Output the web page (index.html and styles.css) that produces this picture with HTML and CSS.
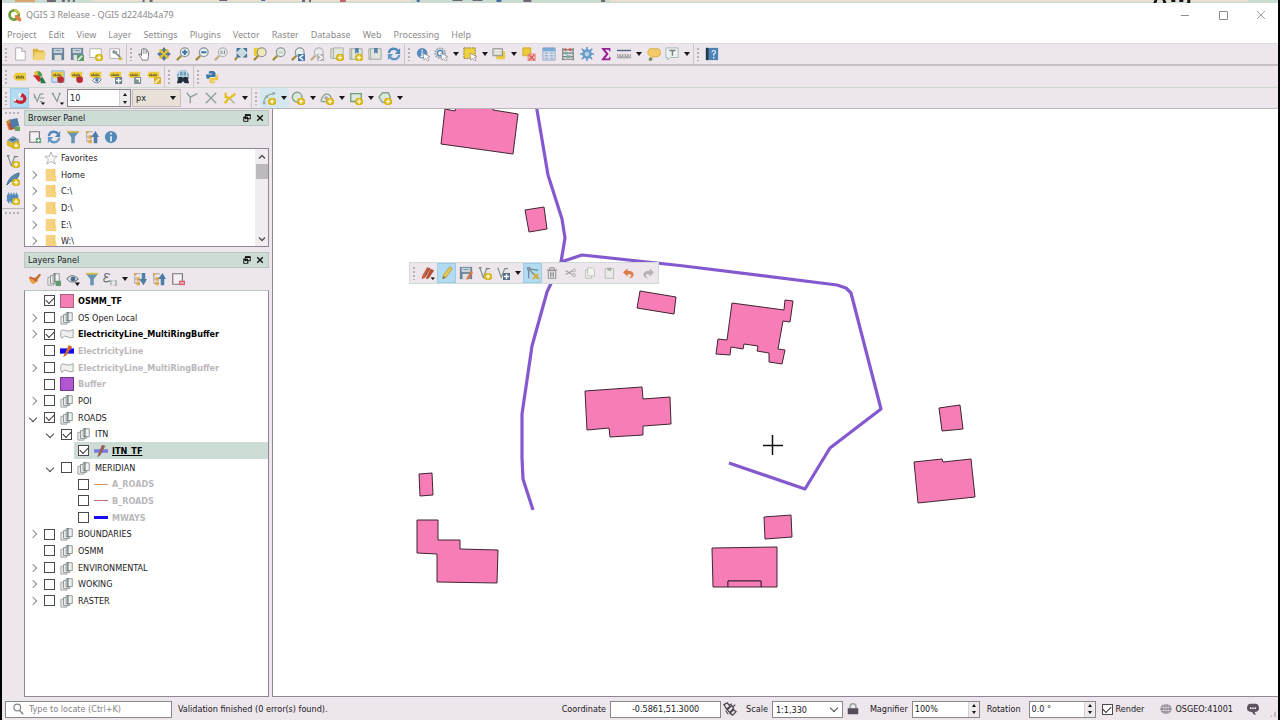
FILE: index.html
```html
<!DOCTYPE html>
<html lang="en">
<head>
<meta charset="utf-8">
<title>QGIS 3 Release - QGIS d2244b4a79</title>
<link rel="stylesheet" href="styles.css">
</head>
<body>
<svg class="defs" aria-hidden="true">
<symbol id="plus" viewBox="0 0 16 16"><path d="M9 8h5l2 2v4l-2 2H9l-2-2v-4z" fill="#d6b51d"/><path d="M11.500 9.500v5M9 12h5" stroke="#fff8c8" stroke-width="1.600"/></symbol>
<symbol id="file" viewBox="0 0 16 16"><path d="M3 1h7l4 4v10H3z" fill="#fff" stroke="#a9a6a9"/><path d="M10 1v4h4" fill="#eee" stroke="#a9a6a9"/></symbol>
<symbol id="folder" viewBox="0 0 16 16"><path d="M1 2h5l2 2h6v10H1z" fill="#d9b43b"/><path d="M3 6h13l-2 9H1z" fill="#f1d477"/></symbol>
<symbol id="save" viewBox="0 0 16 16"><path d="M1 1h14v14H1z" fill="#67839a"/><path d="M3 2h10v5H3z" fill="#c9d3da"/><path d="M4 9h8v6H4z" fill="#e0e0de"/><path d="M5 4h6" stroke="#7690a5"/></symbol>
<symbol id="saveas" viewBox="0 0 16 16"><use href="#save"/><path d="M8 9h8v7H8z" fill="#5f9a66"/><path d="M9 15l5-5" stroke="#e6f1e4" stroke-width="2"/></symbol>
<symbol id="layout" viewBox="0 0 16 16"><path d="M1 2h13v10H1z" fill="#fff" stroke="#aaa9aa"/><use href="#plus"/></symbol>
<symbol id="wrenchpage" viewBox="0 0 16 16"><path d="M1 2h11v11H1z" fill="#fff" stroke="#aaa9aa"/><path d="M6 5l7 7" stroke="#7d8989" stroke-width="2"/><path d="M4 7q-1-3 2-4l1 2 2-1q1 3-2 4z" fill="#8d989a"/><path d="M11 14l4-1" stroke="#cfae2c" stroke-width="2.500"/></symbol>
<symbol id="hand" viewBox="0 0 16 16"><path d="M5 15C4 12 1 10 1 8q2-1 3 2V3q1-2 2 0V2q1-2 2 0v1q1-2 2 0v2q2-1 2 1v5l-1 4z" fill="#fff" stroke="#6c696c"/><path d="M6 3v5M8 3v5M10 4v4" stroke="#969396"/></symbol>
<symbol id="pan" viewBox="0 0 16 16"><path d="M2 3l3-1 3 3 3-3 3 2-2 4 2 4-4 2-2-3-3 3-3-2 2-4z" fill="#e5c231"/><path d="M8 0l3 4H9v2H7V4H5zM8 16l3-4H9v-2H7v2H5zM0 8l4-3v2h2v2H4v2zM16 8l-4-3v2h-2v2h2v2z" fill="#4f769b"/></symbol>
<symbol id="lens" viewBox="0 0 16 16"><path d="M6 10l-5 5" stroke="#a38c31" stroke-width="2.500"/><circle cx="10" cy="6" r="5" fill="#e8efef" stroke="#8d9898" stroke-width="1.400"/></symbol>
<symbol id="zin" viewBox="0 0 16 16"><use href="#lens"/><path d="M10 3v6M7 6h6" stroke="#3c73a5" stroke-width="2.200"/></symbol>
<symbol id="zout" viewBox="0 0 16 16"><use href="#lens"/><path d="M7 6h6" stroke="#3c73a5" stroke-width="2.200"/></symbol>
<symbol id="znat" viewBox="0 0 16 16"><g opacity=".6"><use href="#lens"/></g><path d="M8 4v4M12 4v4M10 5v1M10 7v1" stroke="#777" stroke-width="1"/></symbol>
<symbol id="zfull" viewBox="0 0 16 16"><path d="M4 11l-3 4" stroke="#a38c31" stroke-width="2.500"/><path d="M3 1h12v11H3z" fill="#cad8df"/><path d="M3 1h5L3 6zM15 1v5l-5-5zM15 12h-5l5-5zM3 12V7l5 5z" fill="#48749b"/></symbol>
<symbol id="zsel" viewBox="0 0 16 16"><path d="M1 1h8v9H1z" fill="#ebcb2e"/><use href="#lens"/><circle cx="10" cy="6" r="4" fill="#f2e8b0"/></symbol>
<symbol id="zlayer" viewBox="0 0 16 16"><use href="#lens"/><path d="M7 4h6v4H7z" fill="#d5d6c8"/></symbol>
<symbol id="zlast" viewBox="0 0 16 16"><use href="#lens"/><path d="M8 8h8v8H8z" fill="#487caf"/><path d="M14 9l-4 3 4 3" fill="none" stroke="#fff" stroke-width="1.500"/></symbol>
<symbol id="znext" viewBox="0 0 16 16"><g opacity=".6"><use href="#lens"/></g><path d="M8 8h8v8H8z" fill="#b4b4b4"/><path d="M10 9l4 3-4 3" fill="none" stroke="#fff" stroke-width="1.500"/></symbol>
<symbol id="map" viewBox="0 0 16 16"><path d="M1 2h10v11H1z" fill="#dcdfd4" stroke="#a5aaa1"/><path d="M4 1h11v12H4z" fill="#e2e6dc" stroke="#a5aaa1"/></symbol>
<symbol id="mapnew" viewBox="0 0 16 16"><use href="#map"/><use href="#plus"/></symbol>
<symbol id="bookmark" viewBox="0 0 16 16"><path d="M1 2h14v12H1z" fill="#e2e5de" stroke="#979f98"/><path d="M3 2v12" stroke="#a5aaa1"/><path d="M7 1h4v7L9 6 7 8z" fill="#4f80aa"/></symbol>
<symbol id="bmnew" viewBox="0 0 16 16"><use href="#bookmark"/><use href="#plus"/></symbol>
<symbol id="refresh" viewBox="0 0 16 16"><path d="M2 7q1-5 6-5 3 0 5 3" fill="none" stroke="#4f87b8" stroke-width="2.600"/><path d="M15 1v7H9z" fill="#4f87b8"/><path d="M14 9q-1 5-6 5-3 0-5-3" fill="none" stroke="#6298c3" stroke-width="2.600"/><path d="M1 15V8h6z" fill="#6298c3"/></symbol>
<symbol id="cursor" viewBox="0 0 16 16"><path d="M8 7l8 4-3 1 2 3-2 1-2-3-2 2z" fill="#fff" stroke="#898689" stroke-width=".8"/></symbol>
<symbol id="identify" viewBox="0 0 16 16"><circle cx="7" cy="7" r="6" fill="#568bbb"/><path d="M7 3v2M7 6v5M5 11h4" stroke="#e6f2ff" stroke-width="1.600"/><use href="#cursor"/></symbol>
<symbol id="gear" viewBox="0 0 16 16"><circle cx="8" cy="8" r="4" fill="#b9d3e6" stroke="#6c9fca" stroke-width="3"/><path d="M8 0v4M8 12v4M0 8h4M12 8h4M2 2l3 3M11 11l3 3M14 2l-3 3M2 14l3-3" stroke="#5e94c2" stroke-width="1.700"/></symbol>
<symbol id="action" viewBox="0 0 16 16"><circle cx="7" cy="7" r="5.500" fill="#dce3e7" stroke="#97a1a5" stroke-width="2" stroke-dasharray="2 1"/><circle cx="7" cy="7" r="3" fill="#fff" stroke="#568bbb" stroke-width="1.700"/><use href="#cursor"/></symbol>
<symbol id="select" viewBox="0 0 16 16"><path d="M1 1h13v12H1z" fill="#efd23f" stroke="#7d7440" stroke-dasharray="2 1"/><use href="#cursor"/></symbol>
<symbol id="selform" viewBox="0 0 16 16"><path d="M5 5h10v9H5z" fill="#eacb40"/><path d="M1 2h11v8H1z" fill="#d3d5ce" stroke="#888"/><path d="M3 4h7M3 7h7" stroke="#fff"/></symbol>
<symbol id="deselect" viewBox="0 0 16 16"><path d="M1 1h9v9H1z" fill="#ecca38" stroke="#c9a72c"/><path d="M7 8h8v8H7z" fill="#f6b9b4" stroke="#df7d77"/><path d="M8 9l6 6M14 9l-6 6" stroke="#d64c48" stroke-width="1.300"/></symbol>
<symbol id="table" viewBox="0 0 16 16"><path d="M1 1h14v14H1z" fill="#dbe3ef" stroke="#8ea0bd"/><path d="M1 1h14v4H1z" fill="#79acd5"/><path d="M3 7h4M9 7h4M3 10h4M9 10h4M3 13h4M9 13h4" stroke="#a0adcc" stroke-width="1.500"/></symbol>
<symbol id="abacus" viewBox="0 0 16 16"><path d="M2 1v14M14 1v14M1 14h14M2 3h12M2 7h12M2 11h12" fill="none" stroke="#777d7b" stroke-width="1.300"/><path d="M4 3h2M9 3h3" stroke="#d35a50" stroke-width="3"/><path d="M4 7h4M11 7h2M6 11h5" stroke="#7eac9f" stroke-width="3"/></symbol>
<symbol id="sigma" viewBox="0 0 16 16"><path d="M3 1h10v4h-1l-1-2H7l4 5-4 5h4l1-2h1v4H3v-1l5-6-5-6z" fill="#9c1f99"/></symbol>
<symbol id="ruler" viewBox="0 0 16 16"><path d="M0 4h16" stroke="#49647b" stroke-width="1.600"/><path d="M0 8h16v5H0z" fill="#a9a9a9"/><path d="M2 8v3M5 8v2M8 8v3M11 8v2M14 8v3" stroke="#eee"/></symbol>
<symbol id="tip" viewBox="0 0 16 16"><path d="M3 2h10l3 3v3l-3 3H8l-4 3v-3L1 8V5z" fill="#f2cb68" stroke="#d9aa45"/><circle cx="4" cy="14" r="2" fill="#64945f"/></symbol>
<symbol id="annot" viewBox="0 0 16 16"><path d="M1 1h14v11H6l-3 3v-3H1z" fill="#edf2f1" stroke="#9eb3ae"/><path d="M5 4h7M8.500 4v6" stroke="#777b83" stroke-width="1.600"/></symbol>
<symbol id="help" viewBox="0 0 16 16"><path d="M1 1h14v14H1z" fill="#4c83b3"/><path d="M1 1h3v14H1z" fill="#23384a"/><path d="M8 6q0-2 2-2t2 2q0 1-2 2v2M10 11v2" fill="none" stroke="#e4f0ff" stroke-width="1.400"/></symbol>
<symbol id="label" viewBox="0 0 16 16"><path d="M3 3h12v9H3L0 8z" fill="#eccb3c"/><path d="M4 7v3M6 6v4M8 7v3M10 6v4M12 7v3M4 8h8" stroke="#6e6429"/></symbol>
<symbol id="label2" viewBox="0 0 16 16"><path d="M2 2h12v7H3L0 6z" fill="#eccb3c"/><path d="M3 5v2M5 4v3M7 5v2M9 4v3M11 5v2M3 6h8" stroke="#6e6429"/></symbol>
<symbol id="diag" viewBox="0 0 16 16"><path d="M2 3q3-4 6 0v4l-3 1z" fill="#e5c535"/><path d="M6 1q5 0 6 6l-4 1z" fill="#4c9b4e"/><path d="M1 6h6l4 4-3 4z" fill="#cc302d"/><path d="M9 9l3-1 4 7h-6z" fill="#2e7b45"/></symbol>
<symbol id="lpin" viewBox="0 0 16 16"><use href="#label2"/><path d="M7 8l4 3" stroke="#777" stroke-width="1.500"/><circle cx="11" cy="11" r="3.800" fill="#b92e35"/></symbol>
<symbol id="lpinh" viewBox="0 0 16 16"><path d="M1 1h14v13H1z" fill="#c7e0f1" stroke="#72a6cd"/><use href="#lpin"/></symbol>
<symbol id="leye" viewBox="0 0 16 16"><use href="#label2"/><path d="M4 12q4-6 10-1-5 7-10 1z" fill="#fff" stroke="#5c6b78"/><circle cx="9" cy="11.500" r="2" fill="#417aa8"/></symbol>
<symbol id="lmove" viewBox="0 0 16 16"><use href="#label2"/><path d="M7 8h8v8H7z" fill="#6a7f89"/><path d="M11 9v6M8 12h6" stroke="#fff" stroke-width="1.500"/></symbol>
<symbol id="lrot" viewBox="0 0 16 16"><use href="#label2"/><path d="M7 8h8v8H7z" fill="#7b9393"/><path d="M13 14V10H9" fill="none" stroke="#fff" stroke-width="1.500"/></symbol>
<symbol id="ledit" viewBox="0 0 16 16"><use href="#label2"/><path d="M8 8h8v8H8z" fill="#dab02b"/><path d="M9 15l5-5" stroke="#fff4bd" stroke-width="2"/></symbol>
<symbol id="search3d" viewBox="0 0 16 16"><circle cx="8" cy="7" r="7" fill="#6f9ebd"/><path d="M2 4q6-6 12 0M1 7h14M8 0v8M4 2v6M12 2v6" fill="none" stroke="#d6e5e9"/><path d="M3 8h4l1 2 1-2h4l2 7h-5l-2-3-2 3H1z" fill="#222d38"/></symbol>
<symbol id="python" viewBox="0 0 16 16"><path d="M5 1h5l2 2v5H6L4 10H2L1 5h7V4H4z" fill="#3d77a6"/><path d="M13 5h2v6l-2 1H8v1h4l-1 2H6l-1-2V9h6l2-2z" fill="#ecc94b"/></symbol>
<symbol id="magnet" viewBox="0 0 16 16"><path d="M10 4q5 3 3 7-3 4-10 0" fill="none" stroke="#c62530" stroke-width="3.600"/><path d="M11 3l-2 4M3 9l-1 4" stroke="#c62530" stroke-width="2"/><path d="M7 2l3 1-2 4-2-1zM1 8l3 1-1 3-2-1z" fill="#f5f0f3"/></symbol>
<symbol id="vee" viewBox="0 0 16 16"><path d="M2 3l4 9 3-8 4-1M2 7l3 1M9 8h5M9 12h3" fill="none" stroke="#84998b" stroke-width="1.300"/><path d="M10 13h5l-2.500 3z" fill="#111"/></symbol>
<symbol id="vee2" viewBox="0 0 16 16"><path d="M2 3l5 9 3-9" fill="none" stroke="#84998b" stroke-width="1.300"/><path d="M1 2h2v2H1zM9 2h2v2H9z" fill="#84998b"/><path d="M10 13h5l-2.500 3z" fill="#111"/></symbol>
<symbol id="topo" viewBox="0 0 16 16"><path d="M2 2l4 5 8-4M6 7v7" fill="none" stroke="#8b9f94" stroke-width="1.500"/></symbol>
<symbol id="cross" viewBox="0 0 16 16"><path d="M2 2l12 12M14 2L2 14" stroke="#8b9f94" stroke-width="1.500"/></symbol>
<symbol id="trace" viewBox="0 0 16 16"><path d="M3 2v5l5 1 6-5M7 8l-5 6" fill="none" stroke="#e6bf22" stroke-width="2.600"/><path d="M8 9l5 5" stroke="#9daa9a" stroke-width="1.400"/></symbol>
<symbol id="arc" viewBox="0 0 16 16"><path d="M2 14q0-10 12-11" fill="none" stroke="#8ba89b" stroke-width="1.500"/><path d="M1 12h3v3H1zM4 5h3v3H4zM12 1h3v3h-3z" fill="#9fa9a5"/><use href="#plus"/></symbol>
<symbol id="circ" viewBox="0 0 16 16"><circle cx="7" cy="7" r="5.500" fill="#dce8de" stroke="#83a38d" stroke-width="1.600"/><use href="#plus"/></symbol>
<symbol id="ell" viewBox="0 0 16 16"><path d="M1 11q5-13 12-4M1 11q5 4 12-4" fill="none" stroke="#83a38d" stroke-width="1.500"/><circle cx="7" cy="8" r="2" fill="#9fa9a5"/><use href="#plus"/></symbol>
<symbol id="rect" viewBox="0 0 16 16"><path d="M2 3h12v9H2z" fill="#dce8de" stroke="#6e9e7c" stroke-width="1.500"/><use href="#plus"/></symbol>
<symbol id="poly" viewBox="0 0 16 16"><path d="M1 7l4-5h7l2 5-3 6H5z" fill="#dce8de" stroke="#83a38d" stroke-width="1.600"/><use href="#plus"/></symbol>
<symbol id="datasrc" viewBox="0 0 16 16"><path d="M0 5l5-3 6 10-8 3z" fill="#d58a31"/><path d="M2 8l5-2 4 7-6 2z" fill="#c64b3b"/><path d="M4 3l9-2 2 9-8 3z" fill="#4d7ca9"/><path d="M10 11h6v5h-6z" fill="#68a05d"/></symbol>
<symbol id="geopkg" viewBox="0 0 16 16"><path d="M1 6l7-5 7 4-6 5z" fill="#709bb9"/><path d="M1 6l8 4v6l-8-4z" fill="#ddb62e"/><path d="M9 10l6-5v6l-6 5z" fill="#c99b29"/><path d="M5 5l3 1 3-2" stroke="#1f3446" fill="none"/><use href="#plus"/></symbol>
<symbol id="vnew" viewBox="0 0 16 16"><path d="M2 2l4 11 4-10h4" fill="none" stroke="#84918b" stroke-width="1.400"/><path d="M1 1h3v2H1zM9 2h2v2H9z" fill="#84918b"/><use href="#plus"/></symbol>
<symbol id="feather" viewBox="0 0 16 16"><path d="M1 15Q3 4 15 1q0 8-10 10z" fill="#5e8baa" stroke="#3c6484"/><use href="#plus"/></symbol>
<symbol id="mem" viewBox="0 0 16 16"><path d="M1 4h13v8H1z" fill="#568bbb"/><path d="M3 2v12M6 2v12M9 2v12M12 2v12" stroke="#568bbb" stroke-width="1.500"/><use href="#plus"/></symbol>
<symbol id="addlayer" viewBox="0 0 16 16"><path d="M2 2h11v12H2z" fill="#f4f0f5" stroke="#777579" stroke-width="1.300"/><path d="M9 9h6v6H9z" fill="#65a176"/><path d="M12 10v4M10 12h4" stroke="#fff"/></symbol>
<symbol id="remlayer" viewBox="0 0 16 16"><path d="M2 2h11v12H2z" fill="#f4f0f5" stroke="#777579" stroke-width="1.300"/><path d="M9 10h7v5H9z" fill="#d85b65"/><path d="M10 12.500h5" stroke="#fff"/></symbol>
<symbol id="filter" viewBox="0 0 16 16"><path d="M1 2h14l-5 6v7H6V8z" fill="#6594b5"/><path d="M1 1h14v2H1z" fill="#d6bd48"/></symbol>
<symbol id="collapse" viewBox="0 0 16 16"><path d="M2 2h7M2 2v11M2 8h5M2 13h6" fill="none" stroke="#9fa29b"/><path d="M1 1h3v3H1zM4 6h4v4H4zM4 11h4v4H4z" fill="#dfa953"/><path d="M10 15V8H7l5-7 4 7h-2v7z" fill="#4c7ea7"/></symbol>
<symbol id="expand" viewBox="0 0 16 16"><path d="M2 2h7M2 2v11M2 8h5M2 13h6" fill="none" stroke="#9fa29b"/><path d="M1 1h3v3H1zM4 6h4v4H4zM4 11h4v4H4z" fill="#dfa953"/><path d="M10 1v7H7l5 7 4-7h-2V1z" fill="#4c7ea7"/></symbol>
<symbol id="info" viewBox="0 0 16 16"><circle cx="8" cy="8" r="7" fill="#538ab7"/><path d="M8 3v2M8 7v6" stroke="#e3f0ff" stroke-width="2"/></symbol>
<symbol id="brush" viewBox="0 0 16 16"><path d="M1 5q5 3 7 1l4 4-6 4q-5-3-5-9z" fill="#e5a544"/><path d="M7 8l6-6 2 1-5 7z" fill="#bd762f"/><path d="M2 6l5 2 2 3" fill="none" stroke="#d8543f" stroke-width="1.800"/></symbol>
<symbol id="group" viewBox="0 0 16 16"><path d="M1 6h7v9H1z" fill="#e7e8e7" stroke="#979d9c"/><path d="M4 4h7v9H4z" fill="#eceeed" stroke="#858d8b"/><path d="M7 2h7v9H7z" fill="#f0f2f1" stroke="#858d8b"/><path d="M9 1v11" stroke="#617177" stroke-width="1.400"/></symbol>
<symbol id="groupadd" viewBox="0 0 16 16"><use href="#group"/><path d="M10 10h6v6h-6z" fill="#629b70"/></symbol>
<symbol id="eye" viewBox="0 0 16 16"><path d="M1 8q6-8 13 0-7 7-13 0z" fill="#e5e9e9" stroke="#7f8889" stroke-width="1.300"/><circle cx="8" cy="8" r="2.800" fill="#466e94"/><path d="M10 12h6l-3 4z" fill="#111"/></symbol>
<symbol id="epsilon" viewBox="0 0 16 16"><path d="M8 3Q2 0 2 4q0 2 4 2-5 0-5 3 0 4 7 1" fill="none" stroke="#687274" stroke-width="1.400"/><path d="M9 15V10h2M13 10h2v5h-2" fill="none" stroke="#8bac90" stroke-width="1.300"/></symbol>
<symbol id="blob" viewBox="0 0 16 16"><path d="M1 6q0-4 5-2t9-1v9q-4 1-7-1t-6 2q-2-3-1-7z" fill="#f0f0ee" stroke="#969b98"/></symbol>
<symbol id="star" viewBox="0 0 16 16"><path d="M8 1l2 5h5l-4 4 2 5-5-3-5 3 2-5-4-4h5z" fill="#f7f7f5" stroke="#a9afaa"/></symbol>
<symbol id="dir" viewBox="0 0 16 16"><path d="M2 1h10v14H2z" fill="#f6d281"/><path d="M11 1h2v8h1v6h-3z" fill="#efca65"/><path d="M12 10h1v4h-1z" fill="#fff0a7"/></symbol>
<symbol id="pencils" viewBox="0 0 16 16"><path d="M1 12L7 1l4 2-6 10-4 2z" fill="#c7623c"/><path d="M6 13l5-10 4 2-6 9-3 1z" fill="#b24e31"/><path d="M5 11l5-9" stroke="#6e5547"/><path d="M11 13h5l-2.500 3z" fill="#111"/></symbol>
<symbol id="pencil" viewBox="0 0 16 16"><path d="M3 14l1-4 7-9 3 2-7 10z" fill="#e5c74e" stroke="#b29c54"/><path d="M3 15l1-4 2 2z" fill="#706d67"/></symbol>
<symbol id="savedit" viewBox="0 0 16 16"><use href="#save"/><path d="M8 15l6-10 2 2-5 8z" fill="#d87342"/></symbol>
<symbol id="vmove" viewBox="0 0 16 16"><path d="M2 2l4 11 4-10h4" fill="none" stroke="#84918b" stroke-width="1.400"/><path d="M8 8h8v8H8z" fill="#526e87"/><path d="M12 9v6M9 12h6" stroke="#fff" stroke-width="1.500"/></symbol>
<symbol id="vertex" viewBox="0 0 16 16"><path d="M3 14V3l11 2M3 3l10 11" fill="none" stroke="#748393" stroke-width="1.400"/><path d="M1 1h4v4H1z" fill="#8595a3"/><path d="M8 15l6-6M9 9l6 6" stroke="#d9a92d" stroke-width="2"/></symbol>
<symbol id="trash" viewBox="0 0 16 16"><path d="M1 4h14M5 4V1h6v3M3 5h10v10H3zM6 7v6M8 7v6M10 7v6" fill="none" stroke="#8b8e8b" stroke-width="1.300"/></symbol>
<symbol id="cut" viewBox="0 0 16 16"><path d="M1 5l9 5M1 10l9-5" stroke="#a0a0a0" stroke-width="1.400"/><circle cx="12" cy="4.500" r="2" fill="none" stroke="#a0a0a0"/><circle cx="12" cy="11" r="2" fill="none" stroke="#a0a0a0"/></symbol>
<symbol id="copy" viewBox="0 0 16 16"><path d="M2 4h8v11H2z" fill="#eee" stroke="#b1b9ae"/><path d="M5 1h6l3 3v8H5z" fill="#f3f3f0" stroke="#b1b9ae"/></symbol>
<symbol id="paste" viewBox="0 0 16 16"><path d="M3 2h11v13H3z" fill="#eaeae8" stroke="#a8aea5"/><path d="M6 1h5v4H6z" fill="#a8aea5"/></symbol>
<symbol id="undo" viewBox="0 0 16 16"><path d="M6 2v3q9 0 8 6-1 4-6 4 3-2 3-4t-5-1v3L0 7z" fill="#dc7c49"/></symbol>
<symbol id="redo" viewBox="0 0 16 16"><path d="M10 2v3Q1 5 2 11q1 4 6 4-3-2-3-4t5-1v3l6-6z" fill="#b3b3b3"/></symbol>
<symbol id="editline" viewBox="0 0 16 16"><path d="M0 5h16v6H0z" fill="#150df0"/><path d="M4 14L10 1l4 2-7 10-4 2z" fill="#cf6a2c"/></symbol>
<symbol id="editline2" viewBox="0 0 16 16"><path d="M0 6h16v4H0z" fill="#7a78e2"/><path d="M4 14L9 1l4 1-6 11-4 2z" fill="#946052"/></symbol>
<symbol id="glass" viewBox="0 0 16 16"><circle cx="7" cy="6" r="4.500" fill="none" stroke="#858285" stroke-width="1.500"/><path d="M10 10l5 5" stroke="#858285" stroke-width="1.800"/></symbol>
<symbol id="extent" viewBox="0 0 16 16"><path d="M1 3l4-2 3 4-4 3zM5 9l5-5 2 3-4 5zM8 13l4-4 3 2-4 4zM3 10l3 4M10 2l-3 2M14 3l-3 3" fill="none" stroke="#49454b" stroke-width="1.400"/></symbol>
<symbol id="lock" viewBox="0 0 16 16"><path d="M4 8V5q0-4 4-4t4 4v3" fill="none" stroke="#9aa39f" stroke-width="2"/><path d="M1 7h14v8H1z" fill="#564b59"/></symbol>
<symbol id="globe" viewBox="0 0 16 16"><ellipse cx="8" cy="8" rx="7.500" ry="6.500" fill="#8c858d"/><path d="M1 6h14M1 10h14M5 2v12M11 2v12M8 1v14" stroke="#e5dfe5" stroke-width=".8"/></symbol>
<symbol id="bubble" viewBox="0 0 16 16"><path d="M4 1h8q4 1 4 6t-6 5l2 4q-5-1-5-4Q0 12 0 7t4-6z" fill="#5c5260"/><path d="M4 6h2v2H4zM7 6h2v2H7zM10 6h2v2h-2z" fill="#fff"/></symbol>
<symbol id="float" viewBox="0 0 10 10"><path d="M3 1h6v5H3zM1 4h5v5H1z" fill="#fff" stroke="#111" stroke-width="1.300"/><path d="M3 1.500h6M1 4.500h5" stroke="#111" stroke-width="2"/></symbol>
<symbol id="close" viewBox="0 0 10 10"><path d="M1.500 1.500l7 7M8.500 1.500l-7 7" stroke="#111" stroke-width="1.700"/></symbol>
</svg>

<svg class="backdrop" viewBox="0 0 1280 3" preserveAspectRatio="none" aria-hidden="true">
<path d="M0 0h1280v3H0z" fill="#cbdcd3"/><path d="M90 0h320v1.500H90zM610 0h640v1.500H610z" fill="#efe0cf"/>
<path d="M13 0h20v2H13z" fill="#dba36e"/><path d="M45 0h9v2h-9zM60 0h3v2h-3zM66 0h2v2h-2zM71 0h2v2h-2zM141 0h2v2h-2zM148 0h3v2h-3zM218 0h8v1h-8zM301 0h3v2h-3zM308 0h2v2h-2zM452 0h10v1h-10zM472 0h10v1h-10zM523 0h8v2h-8zM601 0h4v2h-4z" fill="#6d6778"/>
<path d="M260 0h4v1h-4zM416 0h3v2h-3zM496 0h5v2h-5z" fill="#496da6"/><path d="M339 0h6v2h-6z" fill="#c5616d"/><path d="M1156 0h3l-1 3h-3zM1164 0h3l1 3h-3zM1173 0h4v2h-4zM1181 0h4v2h-4zM1189 0h3v3h-3z" fill="#17151a"/>
</svg>

<div class="window">
<header class="titlebar">
<svg class="logo" viewBox="0 0 16 16"><circle cx="7" cy="8" r="5.200" fill="none" stroke="#6f9c3c" stroke-width="3.200"/><path d="M7 3a5 5 0 0 1 5 4" fill="none" stroke="#cfc64b" stroke-width="3"/><path d="M8 8h3l4 4v3h-3L8 11z" fill="#e08244"/></svg>
<h1>QGIS 3 Release - QGIS d2244b4a79</h1>
<div class="winctl">
<button aria-label="Minimize"><svg viewBox="0 0 10 10"><path d="M1 5.500h8" stroke="#8d8d8d"/></svg></button>
<button aria-label="Maximize"><svg viewBox="0 0 10 10"><path d="M1.500 1.500h8v8h-8z" fill="none" stroke="#8d8d8d"/></svg></button>
<button aria-label="Close window"><svg viewBox="0 0 10 10"><path d="M1 1l8 8M9 1L1 9" stroke="#9d9d9d"/></svg></button>
</div>
</header>
<nav class="menubar">
<button>Project</button><button>Edit</button><button>View</button><button>Layer</button><button>Settings</button><button>Plugins</button><button>Vector</button><button>Raster</button><button>Database</button><button>Web</button><button>Processing</button><button>Help</button>
</nav>

<div class="toolrow">
<div class="tools"><i class="grip"></i>
<button aria-label="New"><svg><use href="#file"/></svg></button><button aria-label="Open"><svg><use href="#folder"/></svg></button><button aria-label="Save"><svg><use href="#save"/></svg></button><button aria-label="Save as"><svg><use href="#saveas"/></svg></button><button aria-label="New layout"><svg><use href="#layout"/></svg></button><button aria-label="Layout manager"><svg><use href="#wrenchpage"/></svg></button></div>
<div class="tools"><i class="grip"></i>
<button aria-label="Pan"><svg><use href="#hand"/></svg></button><button aria-label="Pan to selection"><svg><use href="#pan"/></svg></button><button aria-label="Zoom in"><svg><use href="#zin"/></svg></button><button aria-label="Zoom out"><svg><use href="#zout"/></svg></button><button aria-label="Native zoom"><svg><use href="#znat"/></svg></button><button aria-label="Zoom full"><svg><use href="#zfull"/></svg></button><button aria-label="Zoom to selection"><svg><use href="#zsel"/></svg></button><button aria-label="Zoom to layer"><svg><use href="#zlayer"/></svg></button><button aria-label="Zoom last"><svg><use href="#zlast"/></svg></button><button aria-label="Zoom next"><svg><use href="#znext"/></svg></button><button aria-label="New map view"><svg><use href="#mapnew"/></svg></button><button aria-label="New bookmark"><svg><use href="#bmnew"/></svg></button><button aria-label="Bookmarks"><svg><use href="#bookmark"/></svg></button><button aria-label="Refresh"><svg><use href="#refresh"/></svg></button></div>
<div class="tools"><i class="grip"></i>
<button aria-label="Identify"><svg><use href="#identify"/></svg></button><button class="drop" aria-label="Action"><svg><use href="#action"/></svg></button><button class="drop" aria-label="Select"><svg><use href="#select"/></svg></button><button class="drop" aria-label="Select by form"><svg><use href="#selform"/></svg></button><button aria-label="Deselect"><svg><use href="#deselect"/></svg></button><button aria-label="Attribute table"><svg><use href="#table"/></svg></button><button aria-label="Field calculator"><svg><use href="#abacus"/></svg></button><button aria-label="Toolbox"><svg><use href="#gear"/></svg></button><button aria-label="Statistics"><svg><use href="#sigma"/></svg></button><button class="drop" aria-label="Measure"><svg><use href="#ruler"/></svg></button><button aria-label="Map tips"><svg><use href="#tip"/></svg></button><button class="drop" aria-label="Annotation"><svg><use href="#annot"/></svg></button></div>
<div class="tools open"><i class="grip"></i><button aria-label="Help contents"><svg><use href="#help"/></svg></button></div>
</div>

<div class="toolrow">
<div class="tools"><i class="grip"></i>
<button aria-label="Labels"><svg><use href="#label"/></svg></button><button aria-label="Diagrams"><svg><use href="#diag"/></svg></button><button aria-label="Highlight pinned labels"><svg><use href="#lpinh"/></svg></button><button aria-label="Pin labels"><svg><use href="#lpin"/></svg></button><button aria-label="Show labels"><svg><use href="#leye"/></svg></button><button aria-label="Move label"><svg><use href="#lmove"/></svg></button><button aria-label="Rotate label"><svg><use href="#lrot"/></svg></button><button aria-label="Change label"><svg><use href="#ledit"/></svg></button></div>
<div class="tools"><i class="grip"></i><button aria-label="Search catalogue"><svg><use href="#search3d"/></svg></button></div>
<div class="tools open"><i class="grip"></i><button aria-label="Python console"><svg><use href="#python"/></svg></button></div>
</div>

<div class="toolrow">
<div class="tools"><i class="grip"></i>
<button class="on" aria-label="Snapping"><svg><use href="#magnet"/></svg></button><button aria-label="Layers to snap"><svg><use href="#vee"/></svg></button><button aria-label="Snap type"><svg><use href="#vee2"/></svg></button>
<span class="spin tol"><input type="text" value="10" aria-label="Tolerance"><span class="steps"><button aria-label="Up"></button><button aria-label="Down"></button></span></span>
<span class="combo unit"><select aria-label="Unit"><option>px</option></select></span>
<button aria-label="Topological editing"><svg><use href="#topo"/></svg></button><button aria-label="Snap on intersection"><svg><use href="#cross"/></svg></button><button class="drop" aria-label="Tracing"><svg><use href="#trace"/></svg></button></div>
<div class="tools open"><i class="grip"></i>
<button class="drop soft" aria-label="Circular string"><svg><use href="#arc"/></svg></button><button class="drop" aria-label="Circle"><svg><use href="#circ"/></svg></button><button class="drop" aria-label="Ellipse"><svg><use href="#ell"/></svg></button><button class="drop" aria-label="Rectangle"><svg><use href="#rect"/></svg></button><button class="drop" aria-label="Regular polygon"><svg><use href="#poly"/></svg></button></div>
</div>

<main class="work">
<div class="rail"><i class="hgrip"></i>
<button aria-label="Data sources"><svg><use href="#datasrc"/></svg></button><button aria-label="New GeoPackage"><svg><use href="#geopkg"/></svg></button><button aria-label="New shapefile"><svg><use href="#vnew"/></svg></button><button aria-label="New SpatiaLite"><svg><use href="#feather"/></svg></button><button aria-label="New memory layer"><svg><use href="#mem"/></svg></button>
<hr><i class="hgrip"></i></div>

<div class="docks">
<section class="dock">
<header><h2>Browser Panel</h2><button aria-label="Float"><svg><use href="#float"/></svg></button><button aria-label="Close"><svg><use href="#close"/></svg></button></header>
<div class="docktools"><button aria-label="Add layer"><svg><use href="#addlayer"/></svg></button><button aria-label="Reload"><svg><use href="#refresh"/></svg></button><button aria-label="Filter"><svg><use href="#filter"/></svg></button><button aria-label="Collapse"><svg><use href="#collapse"/></svg></button><button aria-label="Properties"><svg><use href="#info"/></svg></button></div>
<div class="browser">
<ul class="tree">
<li><i></i><svg><use href="#star"/></svg>Favorites</li>
<li><i class="shut"></i><svg><use href="#dir"/></svg>Home</li>
<li><i class="shut"></i><svg><use href="#dir"/></svg>C:\</li>
<li><i class="shut"></i><svg><use href="#dir"/></svg>D:\</li>
<li><i class="shut"></i><svg><use href="#dir"/></svg>E:\</li>
<li><i class="shut"></i><svg><use href="#dir"/></svg>W:\</li>
</ul>
<div class="scroll"><svg viewBox="0 0 12 12"><path d="M3 8l3-3 3 3" fill="none" stroke="#555" stroke-width="1.500"/></svg><span class="thumb"></span><svg class="end" viewBox="0 0 12 12"><path d="M3 5l3 3 3-3" fill="none" stroke="#555" stroke-width="1.500"/></svg></div>
</div>
</section>
<section class="dock grow">
<header><h2>Layers Panel</h2><button aria-label="Float"><svg><use href="#float"/></svg></button><button aria-label="Close"><svg><use href="#close"/></svg></button></header>
<div class="docktools"><button aria-label="Styling"><svg><use href="#brush"/></svg></button><button aria-label="Add group"><svg><use href="#groupadd"/></svg></button><button aria-label="Visibility"><svg><use href="#eye"/></svg></button><button aria-label="Filter legend"><svg><use href="#filter"/></svg></button><button class="drop" aria-label="Filter by expression"><svg><use href="#epsilon"/></svg></button><button aria-label="Expand all"><svg><use href="#expand"/></svg></button><button aria-label="Collapse all"><svg><use href="#collapse"/></svg></button><button aria-label="Remove layer"><svg><use href="#remlayer"/></svg></button></div>
<ul class="tree layers">
<li class="bold"><i></i><label><input type="checkbox" checked><span class="sw pink"></span>OSMM_TF</label></li>
<li><i class="shut"></i><label><input type="checkbox"><svg><use href="#group"/></svg>OS Open Local</label></li>
<li class="bold"><i class="shut"></i><label><input type="checkbox" checked><svg><use href="#blob"/></svg>ElectricityLine_MultiRingBuffer</label></li>
<li class="bold off"><i></i><label><input type="checkbox"><svg><use href="#editline"/></svg>ElectricityLine</label></li>
<li class="bold off"><i class="shut"></i><label><input type="checkbox"><svg><use href="#blob"/></svg>ElectricityLine_MultiRingBuffer</label></li>
<li class="bold off"><i></i><label><input type="checkbox"><span class="sw violet"></span>Buffer</label></li>
<li><i class="shut"></i><label><input type="checkbox"><svg><use href="#group"/></svg>POI</label></li>
<li><i class="openv"></i><label><input type="checkbox" checked><svg><use href="#group"/></svg>ROADS</label></li>
<li class="l1"><i class="openv"></i><label><input type="checkbox" checked><svg><use href="#group"/></svg>ITN</label></li>
<li class="l2 bold cur"><i></i><label><input type="checkbox" checked><svg><use href="#editline2"/></svg><u>ITN_TF</u></label></li>
<li class="l1"><i class="openv"></i><label><input type="checkbox"><svg><use href="#group"/></svg>MERIDIAN</label></li>
<li class="l2 bold off"><i></i><label><input type="checkbox"><span class="ln orange"></span>A_ROADS</label></li>
<li class="l2 bold off"><i></i><label><input type="checkbox"><span class="ln red"></span>B_ROADS</label></li>
<li class="l2 bold off"><i></i><label><input type="checkbox"><span class="ln blue"></span>MWAYS</label></li>
<li><i class="shut"></i><label><input type="checkbox"><svg><use href="#group"/></svg>BOUNDARIES</label></li>
<li><i></i><label><input type="checkbox"><svg><use href="#group"/></svg>OSMM</label></li>
<li><i class="shut"></i><label><input type="checkbox"><svg><use href="#group"/></svg>ENVIRONMENTAL</label></li>
<li><i class="shut"></i><label><input type="checkbox"><svg><use href="#group"/></svg>WOKING</label></li>
<li><i class="shut"></i><label><input type="checkbox"><svg><use href="#group"/></svg>RASTER</label></li>
</ul>
</section>
</div>

<div class="canvas">
<svg class="plan" viewBox="273 109 1005 587" preserveAspectRatio="xMinYMin slice">
<g fill="none" stroke="#8458cf" stroke-width="3.200" stroke-linejoin="round">
<path d="M536 104l12 71 14 44 3 19-4 24 21-7 102 11 153 19 9 3 5 5 30 116-51 39-25 41-76-26"/><path d="M561 262l-14 30-15 54-10 68v44l1 21 10 31"/></g>
<g fill="#f77db7" stroke="#3f2532" stroke-width="1">
<path d="M445 109l10 2 1-3 37 0 0 2 25 4-5 40-72-10z"/>
<path d="M525 210l19-3 3 22-18 3z"/>
<path d="M640 291l36 6-2 17-37-6z"/>
<path d="M732 303l52 7 1-10 8 1-3 21-7-1-5 28 7 1-3 14-13-2v-9l-12-2 1-5-14-2-1 5-12-2-1 8-14-1 2-15 9 1z"/>
<path d="M585 391l57-4 1 12 27-2 1 27-28 2v9l-33 2-1-9-22 2z"/>
<path d="M419 474l13-1 1 22-13 1z"/>
<path d="M417 520h21v20h22v9l38 1-1 33-60-1v-28l-20-1z"/>
<path d="M764 517l27-2 1 22-27 2z"/>
<path d="M712 548l65-1v40h-16v-6h-33v6h-15z"/><path d="M728 581h33v6h-33z"/>
<path d="M939 408l21-3 3 24-21 2z"/>
<path d="M914 462l28-3 1 3 28-3 4 38-57 6z"/></g>
<path d="M763 445.500h20M772.500 435v20" stroke="#111" stroke-width="1.500"/>
</svg>
<div class="tools floating"><i class="grip"></i>
<button aria-label="Current edits"><svg><use href="#pencils"/></svg></button><button class="on" aria-label="Toggle editing"><svg><use href="#pencil"/></svg></button><button aria-label="Save edits"><svg><use href="#savedit"/></svg></button><button aria-label="Add feature"><svg><use href="#vnew"/></svg></button><button class="drop" aria-label="Move feature"><svg><use href="#vmove"/></svg></button><button class="on" aria-label="Vertex tool"><svg><use href="#vertex"/></svg></button><button aria-label="Delete"><svg class="small"><use href="#trash"/></svg></button><button aria-label="Cut"><svg class="small"><use href="#cut"/></svg></button><button aria-label="Copy"><svg class="small"><use href="#copy"/></svg></button><button aria-label="Paste"><svg class="small"><use href="#paste"/></svg></button><button aria-label="Undo"><svg class="small"><use href="#undo"/></svg></button><button aria-label="Redo"><svg class="small"><use href="#redo"/></svg></button></div>
</div>
</main>

<footer class="status">
<label class="locator"><svg><use href="#glass"/></svg><input type="text" placeholder="Type to locate (Ctrl+K)" aria-label="Locate"></label>
<p class="msg">Validation finished (0 error(s) found).</p>
<label for="coord">Coordinate</label><input id="coord" class="coord" type="text" value="-0.5861,51.3000">
<button aria-label="Toggle extents"><svg><use href="#extent"/></svg></button>
<label class="lscale" for="scale">Scale</label><span class="combo scale"><select id="scale"><option>1:1,330</option></select></span>
<button aria-label="Lock scale"><svg class="small"><use href="#lock"/></svg></button>
<label class="lmag" for="mag">Magnifier</label><span class="spin mag"><input id="mag" type="text" value="100%"><span class="steps"><button aria-label="Increase"></button><button aria-label="Decrease"></button></span></span>
<label class="lrotn" for="rotn">Rotation</label><span class="spin rotn"><input id="rotn" type="text" value="0.0 °"><span class="steps"><button aria-label="Increase"></button><button aria-label="Decrease"></button></span></span>
<label class="render"><input type="checkbox" checked>Render</label>
<button class="crs"><svg class="small"><use href="#globe"/></svg>OSGEO:41001</button>
<button class="messages" aria-label="Messages"><svg class="small"><use href="#bubble"/></svg></button>
<span class="sizegrip"></span>
</footer>
</div>
</body>
</html>
```
FILE: styles.css
```css
:root {
  --bg: #ede6ed;
  --line: #b9b5b9;
  --head: #cdddd6;
  --frame: #8f8795;
  --ui: "DejaVu Sans Condensed", "DejaVu Sans", sans-serif;
}
* { box-sizing: border-box; }
body {
  margin: 0;
  min-height: 100vh;
  display: flex;
  flex-direction: column;
  background: var(--bg);
  border: solid #000;
  border-width: 0 2px;
  font: 9px/16px "Noto Sans", sans-serif;
  color: #1b181c;
}
button, input, select { font: inherit; color: inherit; margin: 0; padding: 0; border: 0; background: none; }
button { display: flex; align-items: center; justify-content: center; }
svg { width: 14px; height: 14px; flex: none; display: block; }
h1, h2, p, ul { margin: 0; padding: 0; font-size: inherit; font-weight: normal; list-style: none; }
.defs { position: absolute; width: 0; height: 0; }
.backdrop { width: 100%; height: 3px; }
.window { flex: 1; display: flex; flex-direction: column; }

.titlebar { display: flex; align-items: center; height: 24px; background: #fff; color: #8c8a8c; padding-left: 6px; gap: 4px; }
.winctl { display: flex; gap: 4px; margin-left: auto; }
.winctl button { width: 34px; }
.winctl svg { width: 10px; height: 10px; }
.menubar { display: flex; gap: 12px; height: 17px; background: #fff; color: #8c8a8c; padding-left: 5px; border-bottom: 1px solid #e0dae0; }

.toolrow { display: flex; height: 22px; border-bottom: 2px solid #c4c0c4; }
.toolrow + .toolrow { border-bottom: 1px solid #cbd9cd; }
.toolrow + .toolrow + .toolrow { height: 21px; border-bottom: 1px solid var(--line); }
.tools { display: flex; align-items: stretch; padding-right: 1px; border-right: 1px solid #c9c6c9; }
.tools.open { border-right: 0; }
.tools > button { width: 19px; }
.tools > button:nth-of-type(5n) { width: 20px; }
.grip { width: 2px; margin: 4px 3px 3px; background: repeating-linear-gradient(#b5b2b5 0 2px, transparent 2px 4px); }
.tools > .drop:nth-of-type(n), .docktools > .drop { width: 29px; }
.drop::after { content: ""; border: 3px solid transparent; border-top: 4px solid #19171a; border-bottom: 0; margin: 0 1px 0 5px; }
.on { background: #b0dbf0; outline: 1px solid #9bcdea; outline-offset: -1px; }
.soft { background: #d5e8f0; }

.spin { display: flex; background: #fff; border: 1px solid #8a878a; font-family: var(--ui); }
.spin input { width: 0; flex: 1; padding-left: 2px; }
.steps { width: 11px; display: flex; flex-direction: column; background: #ede9ed; border-left: 1px solid #d5d1d5; }
.steps button { flex: 1; }
.steps button::before { content: ""; border: 2px solid transparent; border-bottom: 3px solid #151315; border-top: 0; }
.steps button + button::before { border-bottom: 0; border-top: 3px solid #151315; }
.tol { width: 64px; margin: 1px 0; }
.combo { display: grid; align-items: center; font-family: var(--ui); }
.combo select { appearance: none; grid-area: 1 / 1; width: 100%; height: 100%; padding-left: 3px; }
.combo::after { content: ""; grid-area: 1 / 1; justify-self: end; pointer-events: none; }
.unit { width: 49px; margin: 1px; border: 1px solid #c3beb9; background: #e9e1d8; }
.unit::after { border: 3px solid transparent; border-top: 4px solid #19171a; border-bottom: 0; margin-right: 4px; }

.work { flex: 1; display: flex; }
.rail { width: 22px; display: flex; flex-direction: column; align-items: stretch; padding-top: 3px; }
.rail button { height: 19px; }
.rail button:nth-of-type(even) { height: 18px; }
.rail hr { width: 100%; margin: 1px 0 3px; border: 0; border-top: 1px solid var(--line); }
.hgrip { height: 2px; margin: 0 3px; background: repeating-linear-gradient(90deg, #b5b2b5 0 2px, transparent 2px 4px); }

.docks { width: 245px; display: flex; flex-direction: column; gap: 5px; }
.dock { display: flex; flex-direction: column; font-family: var(--ui); padding-top: 1px; }
.grow { flex: 1; padding-top: 0; }
.dock > header { display: flex; align-items: center; height: 16px; padding: 0 2px 0 3px; background: var(--head); border: 1px solid #bcc5bf; }
.dock h2 { flex: 1; }
.dock header button { width: 13px; }
.dock header svg { width: 8px; height: 8px; }
.docktools { display: flex; height: 22px; padding-left: 1px; }
.docktools button { width: 19px; }
.browser { display: flex; height: 99px; overflow: hidden; background: #fff; border: 1px solid var(--frame); }
.tree { flex: 1; background: #fff; white-space: nowrap; }
.layers { padding-top: 1px; border: 1px solid var(--frame); border-top-color: #b9c6c0; }
.tree li { height: 17px; display: flex; align-items: center; padding-left: 1px; }
.tree li:nth-child(3n) { height: 16px; }
.tree li > svg { margin: 0 3px 0 4px; }
.tree i { width: 14px; height: 10px; flex: none; display: flex; align-items: center; justify-content: center; }
.shut::before, .openv::before { content: ""; width: 5px; height: 5px; border: solid #8f8c8f; border-width: 1px 1px 0 0; transform: rotate(45deg); }
.openv::before { border-color: #4b484b; transform: rotate(135deg); }
.tree label { flex: 1; display: flex; align-items: center; padding-left: 4px; height: 100%; }
.tree label svg, .sw, .ln { width: 14px; margin: 0 4px 0 5px; flex: none; }
.tree .l1 { padding-left: 18px; }
.tree .l2 { padding-left: 35px; }
.bold { font-weight: bold; color: #000; }
.off { color: #bab8ba; }
.cur label { background: var(--head); }
.sw { height: 14px; border: 1px solid; }
.pink { background: #f77db7; border-color: #a9607f; }
.violet { background: #b255d2; border-color: #6d3a80; }
.ln { height: 1px; }
.orange { background: #d9986c; }
.red { background: #c86b73; }
.blue { height: 3px; background: #1a0bf2; }
input[type="checkbox"] { appearance: none; width: 11px; height: 11px; flex: none; border: 1px solid #4e4750; background: #fff; display: grid; place-items: center; }
input[type="checkbox"]:checked::after { content: ""; width: 7px; height: 4px; margin-bottom: 2px; border: solid #2f2c30; border-width: 0 0 1px 1px; transform: rotate(-45deg); }
.scroll { width: 13px; background: #f0ecf0; display: flex; flex-direction: column; align-items: center; }
.scroll svg { width: 12px; height: 15px; }
.thumb { width: 12px; height: 15px; background: #bdbabd; }
.scroll .end { margin-top: auto; }

.canvas { flex: 1; min-width: 0; margin-left: 3px; position: relative; overflow: hidden; background: #fff; border: solid var(--frame); border-width: 0 0 1px 1px; }
.plan { position: absolute; inset: 0; width: 100%; height: 100%; }
.floating { position: absolute; left: 136px; top: 153px; height: 22px; background: var(--bg); border: 1px solid #cfdcd5; }

.status { display: flex; align-items: center; height: 23px; padding: 1px 2px 0 3px; font-family: var(--ui); }
.status > input, .combo.scale, .status .spin, .locator { height: 17px; }
.locator { display: flex; align-items: center; width: 167px; background: #fff; border: 1px solid #8a878a; padding-left: 6px; }
.locator svg { width: 12px; height: 12px; }
.locator input { width: 0; flex: 1; padding-left: 5px; }
.locator input::placeholder { color: #858285; opacity: 1; }
.msg { flex: 1; padding-left: 6px; }
.coord { width: 111px; margin: 0 2px 0 4px; border: 1px solid #8a878a; background: #fff; text-align: center; }
.small { width: 12px; height: 12px; }
.lscale { margin-left: 9px; }
.scale { width: 71px; margin: 0 4px; border: 1px solid #8a878a; background: #fff; }
.scale::after { width: 5px; height: 5px; border: solid #4b484b; border-width: 0 1px 1px 0; transform: rotate(45deg); margin: 0 5px 3px 0; }
.lmag { margin-left: 11px; }
.mag { width: 68px; margin: 0 7px 0 4px; }
.rotn { width: 67px; margin: 0 6px 0 8px; }
.render { display: flex; align-items: center; gap: 3px; }
.crs { gap: 3px; margin-left: 16px; }
.messages { margin-left: 14px; }
.sizegrip { width: 6px; height: 6px; margin: 10px 0 0 11px; background: repeating-linear-gradient(90deg, #bdb8bd 0 2px, transparent 2px 4px); clip-path: polygon(100% 0, 100% 100%, 0 100%); }
```
